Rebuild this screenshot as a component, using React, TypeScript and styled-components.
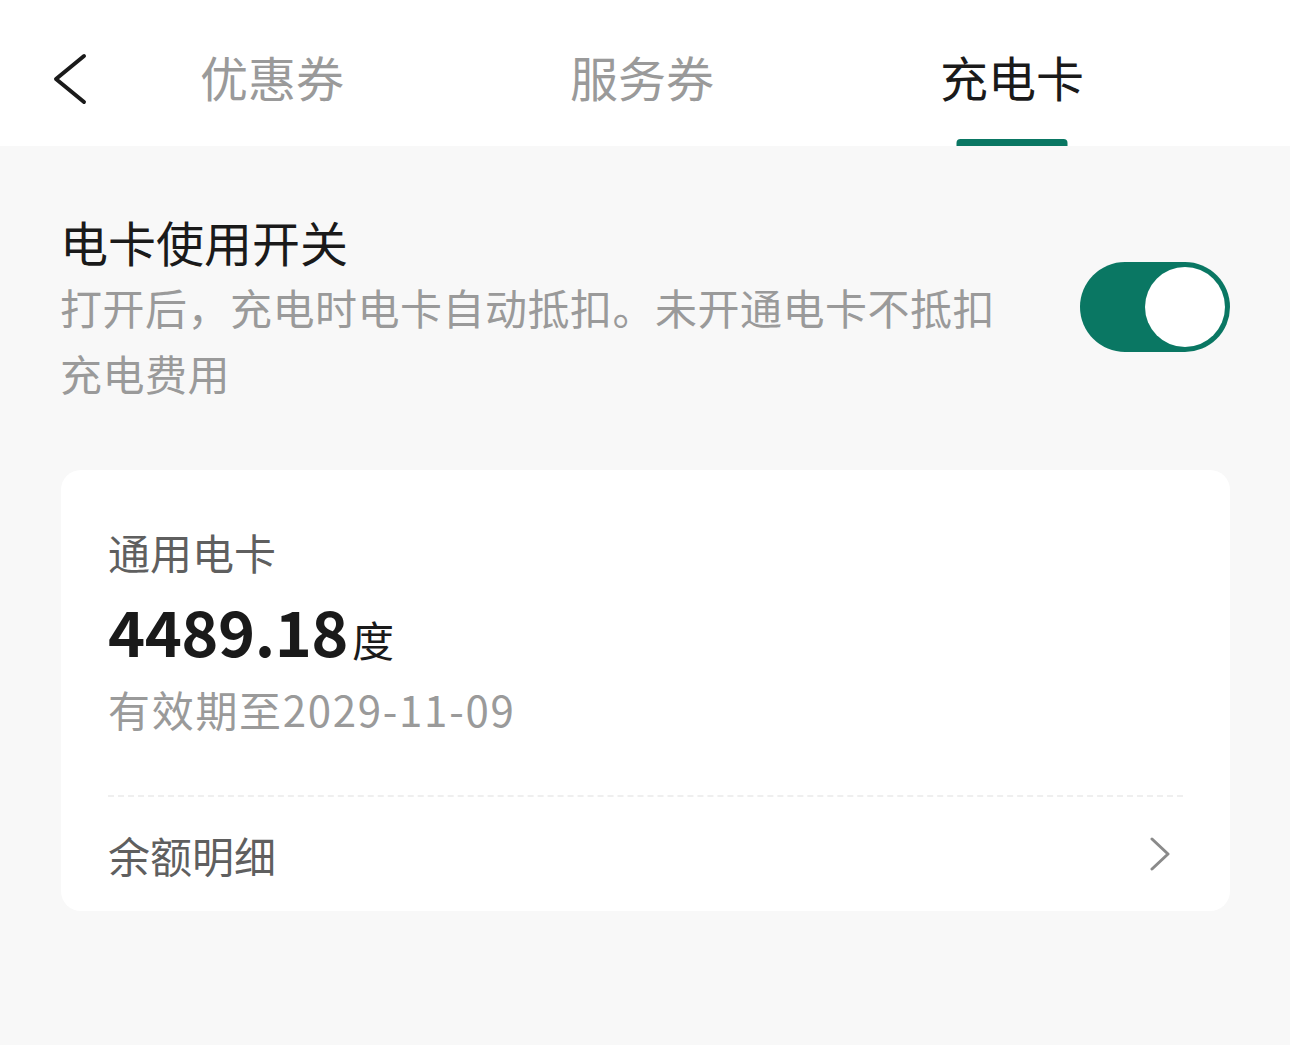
import React from "react";
import styled, { createGlobalStyle } from "styled-components";

const Global = createGlobalStyle`
  html, body { margin: 0; padding: 0; background: #f8f8f8; }
  body { font-family: "Noto Sans CJK SC", "Noto Sans", sans-serif; }
  * { box-sizing: border-box; }
`;

const Page = styled.div`
  width: 1290px;
  min-height: 1045px;
  background: #f8f8f8;
`;

const Header = styled.header`
  height: 146px;
  background: #ffffff;
  display: grid;
  grid-template-columns: 140px 1fr;
  align-items: stretch;
`;

const BackButton = styled.button`
  border: none;
  background: transparent;
  padding: 0 0 0 53px;
  display: flex;
  align-items: center;
  margin-top: 12px;
  cursor: pointer;
`;

const Tabs = styled.nav`
  display: grid;
  grid-template-columns: repeat(3, 370px);
  margin-left: -53px;
`;

const Tab = styled.div<{ $active?: boolean }>`
  position: relative;
  display: flex;
  align-items: center;
  justify-content: center;
  font-size: 48px;
  line-height: 1;
  padding-top: 6px;
  color: ${(p) => (p.$active ? "#1a1a1a" : "#9a9a9a")};
  font-weight: 400;
  &::after {
    content: "";
    display: ${(p) => (p.$active ? "block" : "none")};
    position: absolute;
    bottom: 0;
    left: 50%;
    transform: translateX(-50%);
    width: 111px;
    height: 7px;
    border-radius: 4px 4px 0 0;
    background: #0a7763;
  }
`;

const SwitchSection = styled.section`
  display: flex;
  align-items: center;
  justify-content: space-between;
  padding: 62px 60px 0 60px;
`;

const SwitchText = styled.div`
  width: 960px;
`;

const SwitchTitle = styled.h2`
  margin: 0;
  font-size: 48px;
  line-height: 66px;
  font-weight: 400;
  color: #1a1a1a;
`;

const SwitchDesc = styled.p`
  margin: 0;
  font-size: 42px;
  line-height: 66px;
  color: #9a9a9a;
  width: 945px;
  letter-spacing: 0.5px;
`;

const Toggle = styled.div<{ $on: boolean }>`
  width: 150px;
  height: 90px;
  border-radius: 45px;
  background: ${(p) => (p.$on ? "#0a7763" : "#dddddd")};
  padding: 5px;
  display: flex;
  justify-content: ${(p) => (p.$on ? "flex-end" : "flex-start")};
`;

const Knob = styled.div`
  width: 80px;
  height: 80px;
  border-radius: 50%;
  background: #ffffff;
`;

const Card = styled.div`
  margin: 64px 60px 0 61px;
  background: #ffffff;
  border-radius: 20px;
  padding: 0 47px;
`;

const CardTop = styled.div`
  padding: 52px 0 56px;
  display: flex;
  flex-direction: column;
`;

const CardLabel = styled.div`
  font-size: 42px;
  line-height: 60px;
  color: #5f5f5f;
`;

const Amount = styled.div`
  margin-top: 8px;
  display: flex;
  align-items: baseline;
  line-height: 80px;
  color: #1a1a1a;
`;

const AmountValue = styled.span`
  font-size: 63px;
  font-weight: 700;
  letter-spacing: -0.5px;
`;

const AmountUnit = styled.span`
  font-size: 42px;
  margin-left: 4px;
`;

const Expire = styled.div`
  font-size: 42px;
  line-height: 60px;
  color: #9a9a9a;
  letter-spacing: 1.7px;
`;

const Divider = styled.div`
  border-top: 2px dashed #efefef;
`;

const DetailRow = styled.div`
  height: 114px;
  display: flex;
  align-items: center;
  justify-content: space-between;
  font-size: 42px;
  color: #5f5f5f;
  padding-right: 12px;
`;

const ChevronFlip = styled.span`
  display: flex;
  transform: scaleX(-1);
`;

const Chevron = ({ color, w, h, sw }: { color: string; w: number; h: number; sw: number }) => (
  <svg width={w} height={h} viewBox={`0 0 ${w} ${h}`} fill="none">
    <polyline
      points={`${w - 3},3 3,${h / 2} ${w - 3},${h - 3}`}
      stroke={color}
      strokeWidth={sw}
      strokeLinecap="round"
      strokeLinejoin="round"
    />
  </svg>
);

export default function App() {
  return (
    <Page>
      <Global />
      <Header>
        <BackButton aria-label="返回">
          <Chevron color="#1a1a1a" w={34} h={52} sw={4} />
        </BackButton>
        <Tabs>
          <Tab>优惠券</Tab>
          <Tab>服务券</Tab>
          <Tab $active>充电卡</Tab>
        </Tabs>
      </Header>

      <SwitchSection>
        <SwitchText>
          <SwitchTitle>电卡使用开关</SwitchTitle>
          <SwitchDesc>打开后，充电时电卡自动抵扣。未开通电卡不抵扣充电费用</SwitchDesc>
        </SwitchText>
        <Toggle $on>
          <Knob />
        </Toggle>
      </SwitchSection>

      <Card>
        <CardTop>
          <CardLabel>通用电卡</CardLabel>
          <Amount>
            <AmountValue>4489.18</AmountValue>
            <AmountUnit>度</AmountUnit>
          </Amount>
          <Expire>有效期至2029-11-09</Expire>
        </CardTop>
        <Divider />
        <DetailRow>
          <span>余额明细</span>
          <ChevronFlip>
            <Chevron color="#8a8a8a" w={22} h={36} sw={3} />
          </ChevronFlip>
        </DetailRow>
      </Card>
    </Page>
  );
}
